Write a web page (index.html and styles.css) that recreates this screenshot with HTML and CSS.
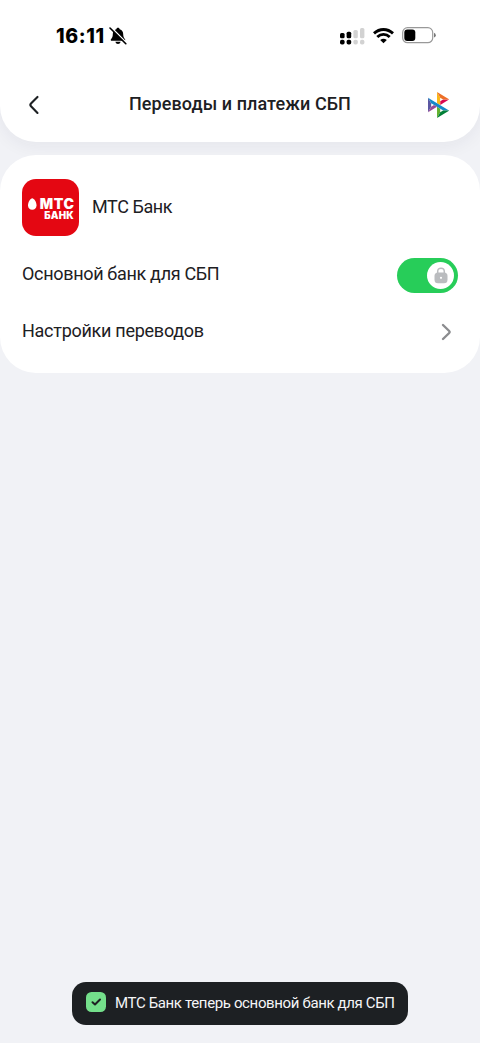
FILE: index.html
```html
<!DOCTYPE html>
<html lang="ru">
<head>
<meta charset="utf-8">
<title>Переводы и платежи СБП</title>
<link rel="stylesheet" href="styles.css">
</head>
<body>
<div class="screen">
  <header class="header">
    <div class="status">
      <span class="time">16:11</span>
      <svg class="bell" width="18" height="18" viewBox="0 0 18 18">
        <path d="M9 .8C10 .8 10.6 1.5 10.7 2.3C13.2 3 14.2 5 14.2 7.3C14.2 10.2 15 11 16 12.2C16.6 13 16.2 13.7 15.3 13.7H2.7C1.8 13.7 1.4 13 2 12.2C3 11 3.8 10.2 3.8 7.3C3.8 5 4.8 3 7.3 2.3C7.4 1.5 8 .8 9 .8ZM6.4 14.8H11.6C11.2 16.2 10.3 17 9 17S6.8 16.2 6.4 14.8Z"/>
        <path d="M2.3 .6L18 16.3" stroke="#fff" stroke-width="1.5"/>
        <path d="M1 1L16.8 16.7" stroke="#000" stroke-width="1.6" stroke-linecap="round"/>
      </svg>
      <svg class="signal" width="25" height="17" viewBox="0 0 25 17">
        <g fill="#000"><rect y="5" width="4.6" height="5.3" rx="1.5"/><rect x="6.6" y="3.8" width="4.6" height="6.5" rx="1.5"/><rect y="11.8" width="4.6" height="4.7" rx="1.8"/><rect x="6.6" y="11.8" width="4.6" height="4.7" rx="1.8"/></g>
        <g fill="#d2d2d2"><rect x="13.4" y="2" width="4.4" height="8.3" rx="1.5"/><rect x="20" y="0" width="4.4" height="10.3" rx="1.5"/><rect x="13.4" y="11.8" width="4.4" height="4.7" rx="1.8"/><rect x="20" y="11.8" width="4.4" height="4.7" rx="1.8"/></g>
      </svg>
      <svg class="wifi" width="21" height="16" viewBox="0 0 21 16">
        <g fill="none" stroke="#000" stroke-width="2.9"><path d="M1 5.4Q5.2 1.5 10.5 1.5T20 5.4"/><path d="M4.3 9Q7 6.4 10.5 6.4T16.7 9"/></g>
        <path d="M7.2 11.9Q10.5 9.4 13.8 11.9L10.5 15.2Z"/>
      </svg>
      <svg class="battery" width="34" height="17" viewBox="0 0 34 17">
        <rect x=".7" y=".7" width="30" height="15" rx="4.8" fill="none" stroke="#999" stroke-width="1.2"/>
        <rect x="2.3" y="2.4" width="11" height="11.6" rx="3"/>
        <path d="M32 5.8Q33.8 6.6 33.8 8.2T32 10.6Z" fill="#777"/>
      </svg>
    </div>
    <div class="nav">
      <svg class="back" width="12" height="20" viewBox="0 0 12 20"><path d="M9.5 1.9L3 8.5Q1.7 9.9 3 11.3L9.5 18" fill="none" stroke="#1d2023" stroke-width="2.1" stroke-linecap="round"/></svg>
      <h1 class="title">Переводы и платежи СБП</h1>
      <svg class="sbp" width="21.3" height="26" viewBox="0 0 97.3 120" preserveAspectRatio="none">
        <path fill="#5b57a2" d="M0 26.12L14.53 52.1V67.94L.02 93.86Z"/>
        <path fill="#d90751" d="M55.8 42.64L69.41 34.3L97.28 34.27L55.8 59.69Z"/>
        <path fill="#fab718" d="M55.72 25.97L55.8 60.36L41.23 51.41V0Z"/>
        <path fill="#ed6f26" d="M97.28 34.27L69.41 34.3L55.72 25.97L41.23 0Z"/>
        <path fill="#63b22f" d="M55.8 94V77.32L41.23 68.54V120Z"/>
        <path fill="#1487c9" d="M69.38 85.74L14.53 52.1L0 26.12L97.22 85.7Z"/>
        <path fill="#017f36" d="M41.24 120L55.8 94L69.38 85.74L97.22 85.7Z"/>
        <path fill="#984995" d="M.02 93.86L41.35 68.54L27.45 60.02L14.53 67.94Z"/>
      </svg>
    </div>
  </header>
  <main class="card">
    <div class="row bank">
      <div class="logo">
        <div class="logo-top"><svg width="8.5" height="12" viewBox="0 0 9 12"><path d="M4.5 0C6.3 0 9 4 9 7.2C9 10.2 7.2 12 4.5 12S0 10.2 0 7.2C0 4 2.7 0 4.5 0Z" fill="#fff"/></svg><span class="mts">МТС</span></div>
        <span class="bank-word">БАНК</span>
      </div>
      <span class="label name">МТС Банк</span>
    </div>
    <div class="row main-bank">
      <span class="label primary">Основной банк для СБП</span>
      <div class="toggle"><div class="knob">
        <svg width="14" height="17" viewBox="0 0 14 17"><path d="M3.7 7V4.4Q3.7 1.2 7 1.2T10.3 4.4V7" fill="none" stroke="#babcbf" stroke-width="1.5"/><rect x=".5" y="5.5" width="13" height="10.8" rx="3.5" fill="#babcbf"/><circle cx="7" cy="10.8" r="1.1" fill="#fff"/></svg>
      </div></div>
    </div>
    <div class="row settings">
      <span class="label transfers">Настройки переводов</span>
      <svg class="chevron" width="11" height="18" viewBox="0 0 11 18"><path d="M2 2L8.2 8Q9.2 9 8.2 10L2 16" fill="none" stroke="#8b8c8f" stroke-width="2.4" stroke-linecap="round"/></svg>
    </div>
  </main>
  <div class="toast">
    <svg class="check" width="20" height="20" viewBox="0 0 20 20"><rect width="20" height="20" rx="5.5" fill="#74df8b"/><path d="M6.5 10.2L9 12.5L14 7.5" fill="none" stroke="#1d2023" stroke-width="2" stroke-linecap="round" stroke-linejoin="round"/></svg>
    <span class="toast-text">МТС Банк теперь основной банк для СБП</span>
  </div>
</div>
</body>
</html>
```
FILE: styles.css
```css
* { box-sizing: border-box; }
body { margin: 0; font-family: Roboto, "Liberation Sans", sans-serif; color: #1d2023; }
svg { display: block; flex: none; }
.screen { height: 1043px; background: #f1f2f6; display: flex; flex-direction: column; overflow: hidden; }
.header { height: 142px; flex: none; background: #fff; border-radius: 0 0 36px 36px; box-shadow: 0 4px 18px rgba(30, 40, 60, .06); }
.status { height: 72px; display: flex; align-items: center; padding-left: 56px; }
.time { width: 50px; font: 800 19.5px/24px Inter, sans-serif; letter-spacing: .6px; color: #000; white-space: nowrap; }
.bell { margin-left: 3px; }
.signal { margin-left: 213px; }
.wifi { margin: 0 0 1px 8px; }
.battery { margin: 0 0 1px 8px; }
.nav { height: 66px; display: grid; grid-template-columns: 80px 1fr 80px; align-items: center; }
.back { margin-left: 28px; }
.title { margin: 0; padding-bottom: 2px; text-align: center; font-size: 18px; line-height: 24px; font-weight: 500; letter-spacing: .08px; white-space: nowrap; }
.sbp { margin-left: 28px; }
.card { height: 218px; margin-top: 13px; padding: 24px 22px 0; background: #fff; border-radius: 36px; }
.row { display: flex; align-items: center; }
.bank { height: 57px; gap: 13px; }
.logo { width: 57px; height: 57px; padding: 18px 5px 0; border-radius: 14px; background: #e40712; color: #fff; display: flex; flex-direction: column; align-items: flex-end; font-family: Inter, sans-serif; }
.logo-top { display: flex; gap: 3px; height: 13px; align-items: center; }
.mts { font-weight: 900; font-size: 14px; line-height: 13px; letter-spacing: .6px; margin-right: -.5px; }
.bank-word { margin-top: 0; font-weight: 900; font-size: 9.8px; line-height: 12px; letter-spacing: .2px; }
.label { padding-bottom: 2px; font-size: 18px; line-height: 24px; white-space: nowrap; }
.name { letter-spacing: -.4px; }
.primary { letter-spacing: -.32px; }
.transfers { letter-spacing: -.27px; }
.main-bank { height: 78px; justify-content: space-between; }
.toggle { width: 61px; height: 35px; margin-top: 1px; padding: 4px; border-radius: 18px; background: #27cd59; display: flex; justify-content: flex-end; }
.knob { width: 27px; height: 27px; border-radius: 50%; background: #fff; display: flex; align-items: center; justify-content: center; }
.settings { height: 36px; padding-right: 6px; justify-content: space-between; }
.toast { width: 336px; height: 43px; margin: auto auto 18px; padding-left: 14px; border-radius: 14px; background: #1d2023; display: flex; align-items: center; gap: 9px; }
.check { margin-bottom: 3px; }
.toast-text { padding-bottom: 1px; font-size: 15px; line-height: 20px; letter-spacing: -.36px; color: #f5f5f7; white-space: nowrap; }
```
